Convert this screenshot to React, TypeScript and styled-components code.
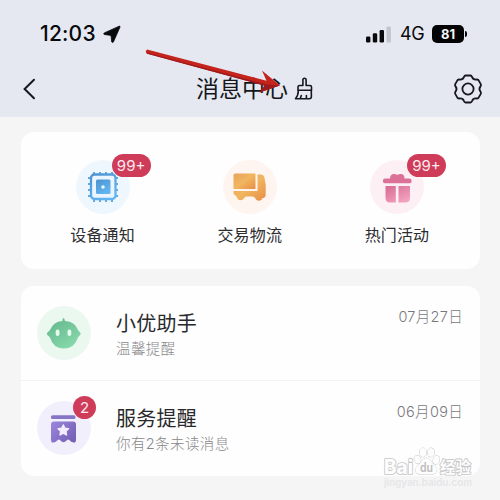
import React from "react";
import styled, { createGlobalStyle } from "styled-components";

const GlobalStyle = createGlobalStyle`
  * { box-sizing: border-box; }
  body {
    margin: 0;
    background: #f5f5f6;
    font-family: Inter, "Noto Sans CJK SC", sans-serif;
    color: #2d2d30;
  }
`;

const Screen = styled.main`
  position: relative;
  width: 500px;
  height: 500px;
  overflow: hidden;
  background: #f5f5f6;
`;

const Header = styled.header`
  height: 117px;
  background: #e5e8f0;
`;

const StatusBar = styled.div`
  height: 61px;
  padding: 7px 32px 0 40px;
  display: flex;
  align-items: center;
  justify-content: space-between;
  color: #08090c;
`;

const StatusGroup = styled.div`
  display: flex;
  align-items: center;
`;

const Clock = styled.span`
  font-size: 21px;
  font-weight: 500;
  line-height: 24px;
  width: 63px;
  letter-spacing: 0.2px;
  white-space: nowrap;
`;

const Network = styled.span`
  font-size: 18px;
  line-height: 20px;
  width: 32px;
  margin-left: 8px;
  letter-spacing: -0.3px;
`;

const Battery = styled.span`
  width: 32px;
  height: 18px;
  border-radius: 5px;
  background: #030305;
  color: #f6f7fb;
  font-size: 13px;
  font-weight: 700;
  line-height: 18px;
  text-align: center;
`;

const BatteryTip = styled.span`
  width: 2px;
  height: 6px;
  margin: 0 1px;
  border-radius: 0 2px 2px 0;
  background: #030305;
`;

const NavBar = styled.div`
  height: 56px;
  padding: 0 17px 0 22px;
  display: grid;
  grid-template-columns: 30px 1fr 30px;
  align-items: center;
`;

const NavTitle = styled.h1`
  margin: 0;
  padding-left: 5px;
  display: flex;
  align-items: center;
  justify-content: center;
  gap: 6px;
  font-size: 23px;
  font-weight: 400;
  line-height: 30px;
  color: #15161b;
`;

const Content = styled.div`
  padding: 15px 20px 0 21px;
  display: flex;
  flex-direction: column;
  gap: 17px;
`;

const Card = styled.section<{ $height: number }>`
  height: ${(p) => p.$height}px;
  border-radius: 13px;
  background: #fefefe;
`;

const Categories = styled(Card)`
  padding: 28px 8px 0;
  display: grid;
  grid-template-columns: repeat(3, 147.2px);
`;

const Category = styled.div`
  display: flex;
  flex-direction: column;
  align-items: center;
`;

const IconDisc = styled.div<{ $size: number; $tint: string }>`
  position: relative;
  flex: none;
  width: ${(p) => p.$size}px;
  height: ${(p) => p.$size}px;
  border-radius: 50%;
  background: ${(p) => p.$tint};
  svg { display: block; width: 100%; height: 100%; }
`;

const CountBadge = styled.span<{ $left: number; $top: number; $width: number }>`
  position: absolute;
  left: ${(p) => p.$left}px;
  top: ${(p) => p.$top}px;
  width: ${(p) => p.$width}px;
  height: 23px;
  border-radius: 12px;
  background: #cf3c59;
  color: #fbeaf0;
  font-size: 15px;
  line-height: 23px;
  text-align: center;
`;

const CategoryLabel = styled.span`
  margin-top: 9px;
  font-size: 16px;
  line-height: 24px;
  letter-spacing: 0.15px;
`;

const MessageRow = styled.article<{ $divided?: boolean }>`
  height: 95px;
  padding: 0 17px 0 16px;
  display: grid;
  grid-template-columns: 79px 1fr auto;
  border-bottom: ${(p) => (p.$divided ? "1px solid #f3f3f4" : "none")};
`;

const IconSlot = styled.div`
  padding-top: 20px;
`;

const MessageText = styled.div`
  padding-top: 23px;
`;

const Sender = styled.h2`
  margin: 0;
  font-size: 20px;
  font-weight: 400;
  line-height: 30px;
  letter-spacing: 0.25px;
  color: #29292c;
`;

const Preview = styled.p`
  margin: 0;
  font-size: 14.5px;
  font-weight: 300;
  line-height: 20px;
  letter-spacing: 0.4px;
  color: #88888b;
`;

const DateText = styled.time`
  padding-top: 21px;
  font-size: 14.5px;
  font-weight: 300;
  line-height: 20px;
  letter-spacing: 0.3px;
  color: #79797c;
`;

const ArrowOverlay = styled.svg`
  position: absolute;
  left: 140px;
  top: 44px;
`;

const Watermark = styled.div`
  position: absolute;
  left: 383px;
  top: 444px;
  width: 96px;
  height: 46px;
  svg { display: block; overflow: visible; }
`;

const LocationIcon = () => (
  <svg width="18" height="18" viewBox="0 0 18 18">
    <path d="M16.2 1.2 1.3 7.9q-1.200.9 0 1.600l6.700.9.700 6.500q.7 1.200 1.700.1L17 2q.3-1.200-.8-.8Z" fill="currentColor" stroke="currentColor" strokeWidth="0.8" strokeLinejoin="round" />
  </svg>
);

const SignalIcon = () => (
  <svg width="26" height="17" viewBox="0 0 26 17">
    <rect x="0" y="10.5" width="4.4" height="6" rx="1.3" fill="#08090c" />
    <rect x="6.8" y="7.3" width="4.4" height="9.2" rx="1.3" fill="#08090c" />
    <rect x="13.6" y="4" width="4.4" height="12.5" rx="1.3" fill="#08090c" />
    <rect x="20.5" y="0.5" width="4.4" height="16" rx="1.3" fill="#c3c5cc" />
  </svg>
);

const BackIcon = () => (
  <svg width="16" height="22" viewBox="0 0 16 22">
    <path d="M12 1.8 2.6 11 12 20.2" fill="none" stroke="#17181f" strokeWidth="2" strokeLinecap="round" />
  </svg>
);

const BrushIcon = () => (
  <svg width="20" height="24" viewBox="0 0 20 24" fill="none" stroke="#17181f" strokeWidth="1.6" strokeLinejoin="round" strokeLinecap="round">
    <path d="M8.9 8.500V3q0-1.800 1.600-1.800T12.100 3v5.500H16q1.500 0 1.500 1.500v3.300H4V10q0-1.500 1.500-1.500Z" />
    <path d="M4.300 13.500Q4.300 18.500 1.500 21.700H15.500Q17.300 21.700 17.400 19.500L17.300 13.500M7.300 18.500 6.300 21.500M12.400 18.500v3" />
  </svg>
);

const lobes = [0, 60, 120, 180, 240, 300];
const turn = (x: number, y: number, deg: number) => {
  const a = (deg * Math.PI) / 180;
  return `${(x * Math.cos(a) - y * Math.sin(a)).toFixed(2)} ${(x * Math.sin(a) + y * Math.cos(a)).toFixed(2)}`;
};
const gearPath =
  lobes
    .map(
      (d, i) =>
        `${i ? "L" : "M"}${turn(-2.4, -13.5, d)}L${turn(2.4, -13.5, d)}Q${turn(3.4, -13.3, d)} ${turn(4, -12.1, d)}Q${turn(5.2, -9, d)} ${turn(-4, -12.1, d + 60)}Q${turn(-3.4, -13.3, d + 60)} ${turn(-2.4, -13.5, d + 60)}`
    )
    .join("") + "Z";

const SettingsIcon = () => (
  <svg width="30" height="30" viewBox="-15 -15 30 30" fill="none" stroke="#17181f" strokeWidth="1.8" strokeLinejoin="round">
    <path d={gearPath} />
    <circle r="5.600" />
  </svg>
);

const ChipIcon = () => (
  <svg viewBox="0 0 54 54">
    <defs>
      <linearGradient id="chip" x1="0" y1="0" x2="0.6" y2="1">
        <stop offset="0" stopColor="#4c92d0" />
        <stop offset="1" stopColor="#62b5f1" />
      </linearGradient>
    </defs>
    <path d="M18 12v30M24 12v30M30 12v30M36 12v30M12 18h30M12 24h30M12 30h30M12 36h30" stroke="#62a9df" strokeWidth="2" />
    <rect x="15" y="14.500" width="24.500" height="24.500" rx="3.500" fill="#eaf5ff" stroke="url(#chip)" strokeWidth="2.300" />
    <rect x="20" y="19.500" width="14.500" height="14.500" rx="1.500" fill="url(#chip)" />
    <circle cx="27" cy="27" r="1.800" fill="#e8f6ff" />
  </svg>
);

const TruckIcon = () => (
  <svg viewBox="0 0 54 54">
    <defs>
      <linearGradient id="truck" x1="0" y1="0" x2="1" y2="1">
        <stop offset="0" stopColor="#e9a35a" />
        <stop offset="0.500" stopColor="#f1b65f" />
        <stop offset="1" stopColor="#e78d47" />
      </linearGradient>
    </defs>
    <path d="M12 13.500h20.500v15.500H10.500V15q0-1.500 1.500-1.500Z" fill="url(#truck)" />
    <path d="M34.500 14.500h3.500q2.500 0 3.400 3l1.300 7v10q0 3-2 3.500h-1.200a3.800 3.800 0 0 1-7.300 0l-2.200-1.500h-7L21 38a3.800 3.800 0 0 1-7 0l-1-2.300q-2.500-.7-2.500-2.700v-2H34.500Z" fill="url(#truck)" />
  </svg>
);

const GiftIcon = () => (
  <svg viewBox="0 0 54 54">
    <defs>
      <linearGradient id="gift" x1="0" y1="0" x2="0.700" y2="1">
        <stop offset="0" stopColor="#d86991" />
        <stop offset="1" stopColor="#f2a2bf" />
      </linearGradient>
    </defs>
    <path d="M15 18.500h5q0-4.500 4-4.500 2 0 3.300 1Q29 13.800 31 14q3.500.2 3.500 4.500h5q2 0 2 2v1.300q0 1.400-1.500 1.400H14.500q-1.500 0-1.500-1.400v-1.300q0-2 2-2Z" fill="#dc7197" />
    <path d="M15.500 26h10.300v16.500H20q-4.500 0-4.500-5ZM28.500 26H40v11.500q0 5-4.500 5h-7Z" fill="url(#gift)" />
  </svg>
);

const AssistantIcon = () => (
  <svg viewBox="0 0 54 54">
    <defs>
      <linearGradient id="assistant" x1="0" y1="0" x2="0.700" y2="1">
        <stop offset="0" stopColor="#61b58a" />
        <stop offset="1" stopColor="#88d9ac" />
      </linearGradient>
    </defs>
    <path d="M26.500 12q.9 0 1.500 2.900Q38.500 15.700 41 24l2.400 3q.8.900-.2 1.700L41 31.500Q37.500 42.500 27 42.500 16 42.500 13 31.500l-2.800-2.800q-.9-1 .1-2L13 24Q16 15.700 25.300 14.900 25.600 12 26.500 12Z" fill="url(#assistant)" />
    <rect x="18.700" y="23.500" width="3.800" height="6.500" rx="1.900" fill="#e7faee" />
    <rect x="30.500" y="23.500" width="3.800" height="6.500" rx="1.900" fill="#e7faee" />
  </svg>
);

const ServiceIcon = () => (
  <svg viewBox="0 0 54 54">
    <defs>
      <linearGradient id="service" x1="0" y1="0" x2="1" y2="0.700">
        <stop offset="0" stopColor="#9b87df" />
        <stop offset="1" stopColor="#7561b5" />
      </linearGradient>
    </defs>
    <rect x="14" y="14.200" width="24.500" height="3.800" rx="1.600" fill="#8674c5" />
    <path d="M17 20.500h19q3 0 3 3V39q0 3-2.500 2.600-2.500-.5-4.200-2.500-1.300-1.200-2.700.3-3.100 3.600-6.200 0-1.400-1.500-2.700-.3-1.700 2-4.200 2.500Q14 42 14 39V23.500q0-3 3-3Z" fill="url(#service)" />
    <path d="m26.300 24 1.600 3.300 3.600.5-2.600 2.500.6 3.600-3.200-1.700-3.200 1.700.6-3.600-2.600-2.500 3.600-.5Z" fill="#f3edff" stroke="#f3edff" strokeWidth="1.500" strokeLinejoin="round" />
  </svg>
);

const PawMark = () => (
  <svg width="96" height="46" viewBox="0 0 96 46" fontFamily='Inter, "Noto Sans CJK SC", sans-serif'>
    <g fill="#fdfdfd" stroke="#c6c6c8" strokeWidth="1.700" paintOrder="stroke" strokeLinejoin="round">
      <text x="1" y="29.500" fontSize="20" fontWeight="800" textLength="29" lengthAdjust="spacingAndGlyphs">Bai</text>
      <g strokeWidth="1">
        <ellipse cx="34.500" cy="15.500" rx="3.200" ry="4.100" transform="rotate(-12 34.500 15.500)" />
        <ellipse cx="40" cy="8.500" rx="3.300" ry="4.400" />
        <ellipse cx="48" cy="8.500" rx="3.300" ry="4.400" transform="rotate(8 48 8.500)" />
        <ellipse cx="53.300" cy="16" rx="3.200" ry="4.200" transform="rotate(16 53.300 16)" />
        <path d="M43.500 14q3 0 5 4 1.700 2.500 4 4.600 2.500 3 .4 6-1.700 2-5.500 1.600-4-.5-8 0-4.300.5-6.300-1.600-2-3 .7-6 2.800-2.400 4.500-4.800 2.200-3.800 5.200-3.800Z" />
      </g>
      <text x="37" y="28.300" fontSize="12.500" fontWeight="600" textLength="13" lengthAdjust="spacingAndGlyphs" fill="#bcbcbe" stroke="none">du</text>
      <text x="57" y="28.800" fontSize="15.500" fontWeight="700" textLength="31" lengthAdjust="spacingAndGlyphs">经验</text>
    </g>
    <text x="1" y="42" fontSize="10" fontWeight="600" fill="#e6e6e7" textLength="88" lengthAdjust="spacingAndGlyphs">jingyan.baidu.com</text>
  </svg>
);

const categories = [
  { label: "设备通知", tint: "#eff7fe", icon: <ChipIcon />, badge: "99+", left: 36 },
  { label: "交易物流", tint: "#fff5f0", icon: <TruckIcon /> },
  { label: "热门活动", tint: "#fdf0f4", icon: <GiftIcon />, badge: "99+", left: 37 },
];

const messages = [
  { sender: "小优助手", preview: "温馨提醒", date: "07月27日", tint: "#ebf8f0", icon: <AssistantIcon /> },
  { sender: "服务提醒", preview: "你有2条未读消息", date: "06月09日", tint: "#f1effc", icon: <ServiceIcon />, badge: "2" },
];

export default function App() {
  return (
    <>
      <GlobalStyle />
      <Screen>
        <Header>
          <StatusBar>
            <StatusGroup>
              <Clock>12:03</Clock>
              <LocationIcon />
            </StatusGroup>
            <StatusGroup>
              <SignalIcon />
              <Network>4G</Network>
              <Battery>81</Battery>
              <BatteryTip />
            </StatusGroup>
          </StatusBar>
          <NavBar>
            <BackIcon />
            <NavTitle>
              <span>消息中心</span>
              <BrushIcon />
            </NavTitle>
            <SettingsIcon />
          </NavBar>
        </Header>
        <Content>
          <Categories $height={137}>
            {categories.map((c) => (
              <Category key={c.label}>
                <IconDisc $size={54} $tint={c.tint}>
                  {c.icon}
                  {c.badge && (
                    <CountBadge $left={c.left} $top={-6} $width={39}>{c.badge}</CountBadge>
                  )}
                </IconDisc>
                <CategoryLabel>{c.label}</CategoryLabel>
              </Category>
            ))}
          </Categories>
          <Card $height={190}>
            {messages.map((m, i) => (
              <MessageRow key={m.sender} $divided={i === 0}>
                <IconSlot>
                  <IconDisc $size={54} $tint={m.tint}>
                    {m.icon}
                    {m.badge && (
                      <CountBadge $left={36} $top={-5} $width={23}>{m.badge}</CountBadge>
                    )}
                  </IconDisc>
                </IconSlot>
                <MessageText>
                  <Sender>{m.sender}</Sender>
                  <Preview>{m.preview}</Preview>
                </MessageText>
                <DateText>{m.date}</DateText>
              </MessageRow>
            ))}
          </Card>
        </Content>
        <ArrowOverlay width="146" height="50" viewBox="0 0 146 50">
          <path d="M7 5.700Q4.800 7.300 6.800 9.600L124.500 41.500 119.500 48.500 140 41.500 122 26.500 126.500 36.800 8 5.700Q7.500 5.400 7 5.700Z" fill="#c5241d" />
          <path d="M6.500 8.500 7 9.800 124.500 41.700 119.500 48.500 140 41.500 127 40.500Z" fill="#9f1a1b" />
        </ArrowOverlay>
        <Watermark>
          <PawMark />
        </Watermark>
      </Screen>
    </>
  );
}
